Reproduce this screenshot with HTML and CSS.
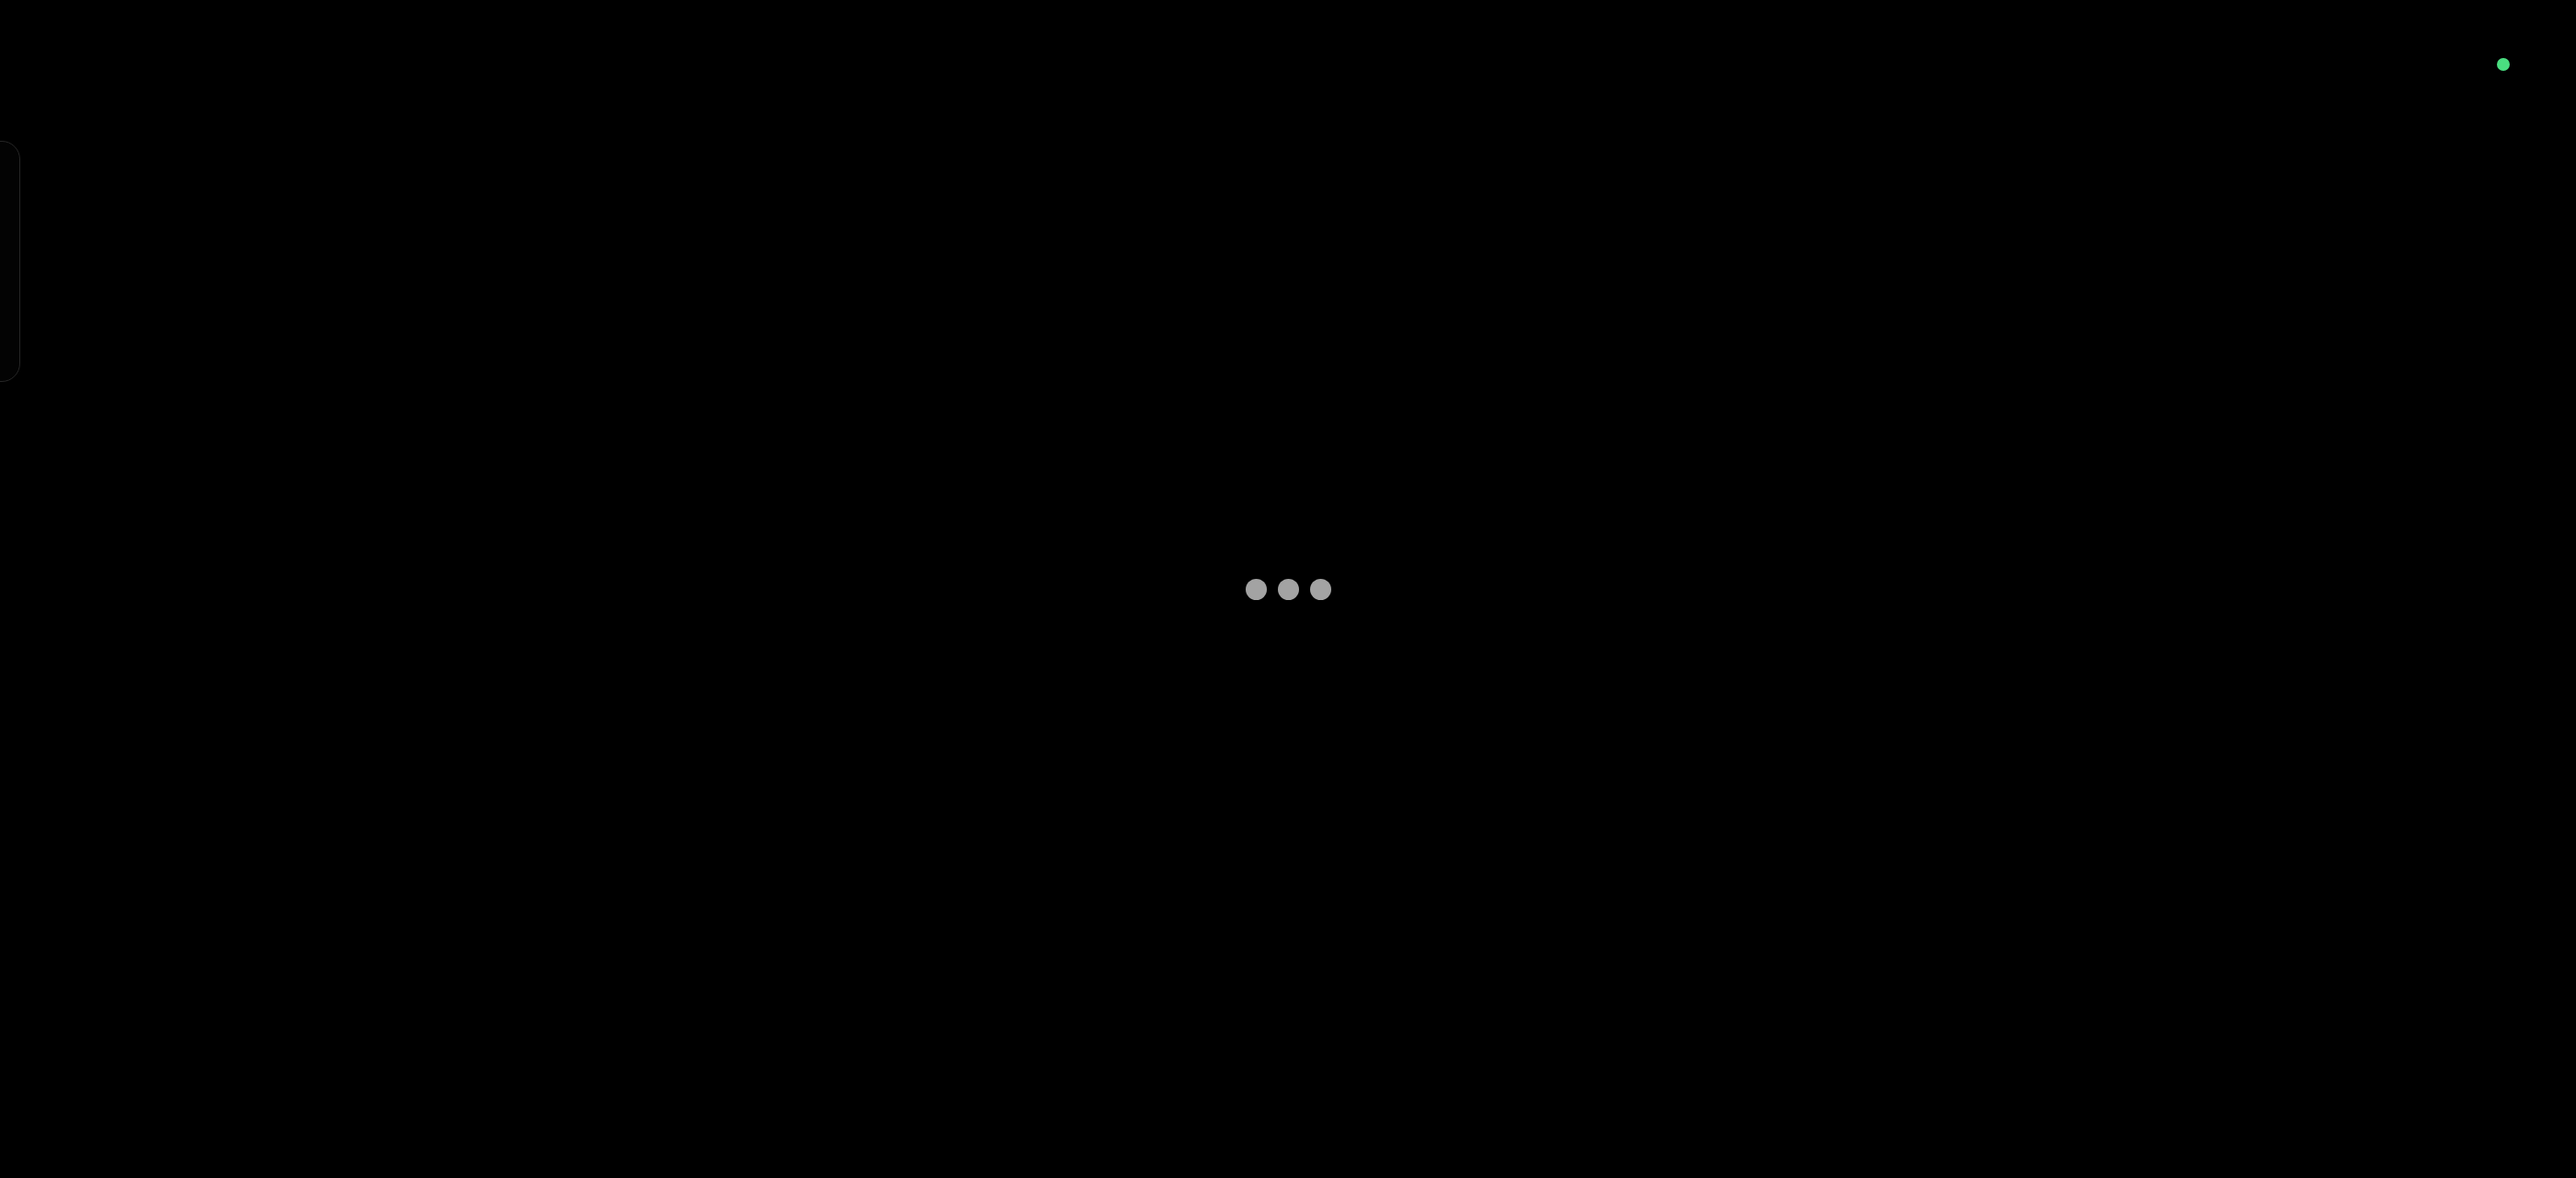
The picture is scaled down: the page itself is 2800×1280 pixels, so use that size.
FILE: index.html
```html
<!DOCTYPE html>
<html lang="en">

<head>
    <meta charset="UTF-8">
    <meta name="viewport" content="width=device-width, initial-scale=1.0">
    <title>Loading</title>
    <link rel="stylesheet" href="styles.css">
</head>

<body>
    <!-- painel lateral recolhido -->
    <div class="side-panel"></div>

    <!-- status da conexão -->
    <span class="status-dot"></span>

    <main class="loader-area">
        <div class="loader">
            <span class="loader-dot"></span>
            <span class="loader-dot"></span>
            <span class="loader-dot"></span>
        </div>
    </main>
</body>

</html>
```

FILE: styles.css
```css
html, body {
    height: 100%;
}

body {
    font-family: "Liberation Sans", Arial, sans-serif;
    margin: 0;
    background-color: #000;
    overflow: hidden;
}

.side-panel {
    position: fixed;
    top: 153px;
    left: -60px;
    width: 80px;
    height: 260px;
    border: 1px solid #262626;
    border-radius: 20px;
    background-color: #030303;
}

.status-dot {
    position: fixed;
    top: 63px;
    right: 72px;
    width: 14px;
    height: 14px;
    border-radius: 50%;
    background-color: #4ade80;
}

.loader-area {
    height: 100%;
    display: flex;
    align-items: center;
    justify-content: center;
}

.loader {
    display: flex;
    gap: 12px;
}

.loader-dot {
    width: 23px;
    height: 23px;
    border-radius: 50%;
    background-color: #a3a3a3;
}
```
